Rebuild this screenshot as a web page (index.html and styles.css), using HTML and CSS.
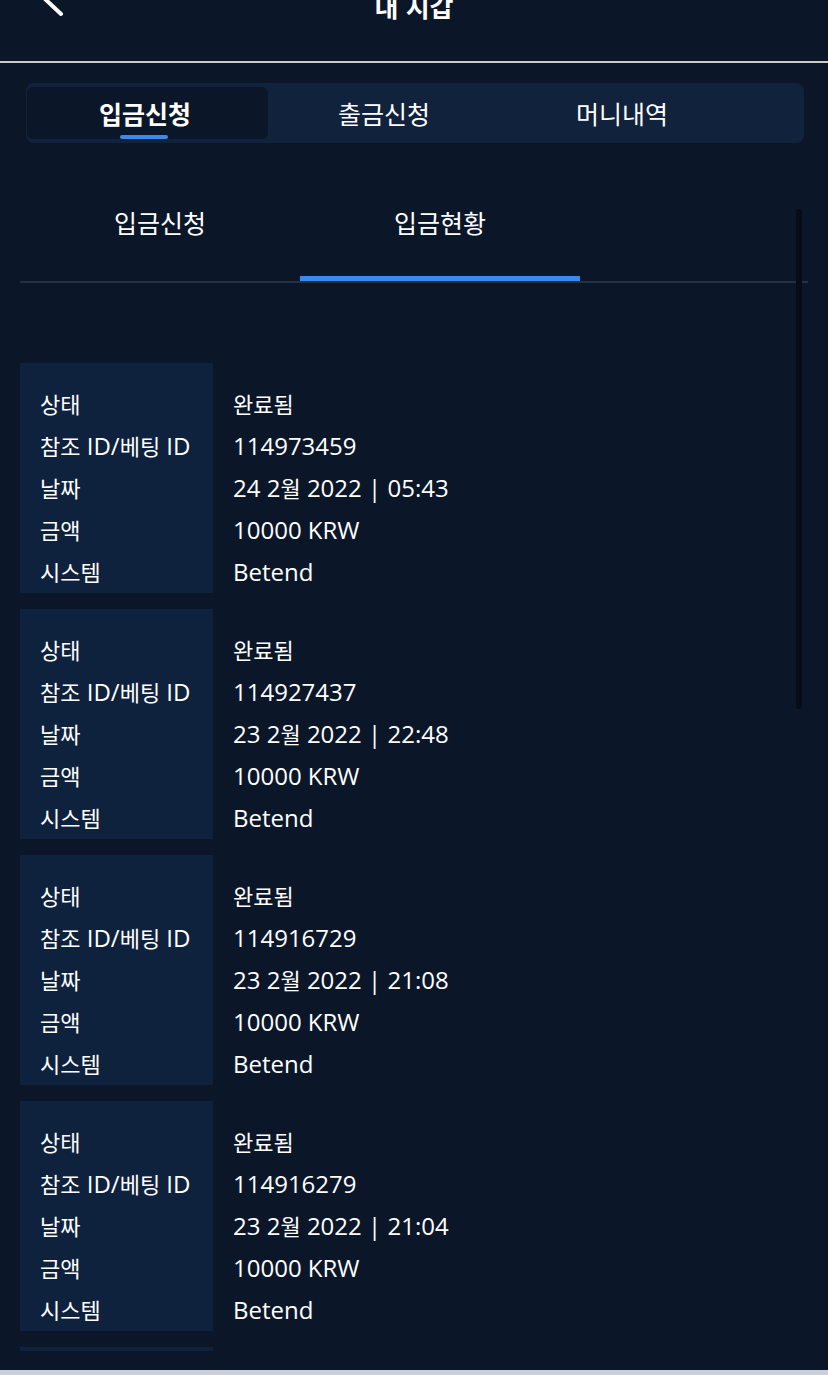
FILE: index.html
```html
<!DOCTYPE html>
<html lang="ko">
<head>
<meta charset="utf-8">
<title>내 지갑</title>
<link rel="stylesheet" href="styles.css">
</head>
<body>
<header class="topbar">
	<a href="javascript:void(0);" class="back">
		<svg width="30" height="42" viewBox="0 0 30 42"><polyline points="25,5 8,22 25,38" fill="none" stroke="#fff" stroke-width="4" stroke-linecap="round" stroke-linejoin="round"/></svg>
	</a>
	<h1 class="title">내 지갑</h1>
	<span></span>
</header>

<nav class="tabs">
	<a href="javascript:void(0);" class="tab active">입금신청</a>
	<a href="javascript:void(0);" class="tab">출금신청</a>
	<a href="javascript:void(0);" class="tab">머니내역</a>
</nav>

<section class="panel">
	<div class="subtabs">
		<a href="javascript:void(0);" class="subtab">입금신청</a>
		<a href="javascript:void(0);" class="subtab active">입금현황</a>
	</div>

	<div class="history">
		<div class="record">
			<div class="labels">
				<div class="ko">상태</div>
				<div><span class="ko">참조</span> ID/<span class="ko">베팅</span> ID</div>
				<div class="ko">날짜</div>
				<div class="ko">금액</div>
				<div class="ko">시스템</div>
			</div>
			<div class="values">
				<div class="ko">완료됨</div>
				<div>114973459</div>
				<div>24 2<span class="ko">월</span> 2022 | 05:43</div>
				<div>10000 KRW</div>
				<div>Betend</div>
			</div>
		</div>
		<div class="record">
			<div class="labels">
				<div class="ko">상태</div>
				<div><span class="ko">참조</span> ID/<span class="ko">베팅</span> ID</div>
				<div class="ko">날짜</div>
				<div class="ko">금액</div>
				<div class="ko">시스템</div>
			</div>
			<div class="values">
				<div class="ko">완료됨</div>
				<div>114927437</div>
				<div>23 2<span class="ko">월</span> 2022 | 22:48</div>
				<div>10000 KRW</div>
				<div>Betend</div>
			</div>
		</div>
		<div class="record">
			<div class="labels">
				<div class="ko">상태</div>
				<div><span class="ko">참조</span> ID/<span class="ko">베팅</span> ID</div>
				<div class="ko">날짜</div>
				<div class="ko">금액</div>
				<div class="ko">시스템</div>
			</div>
			<div class="values">
				<div class="ko">완료됨</div>
				<div>114916729</div>
				<div>23 2<span class="ko">월</span> 2022 | 21:08</div>
				<div>10000 KRW</div>
				<div>Betend</div>
			</div>
		</div>
		<div class="record">
			<div class="labels">
				<div class="ko">상태</div>
				<div><span class="ko">참조</span> ID/<span class="ko">베팅</span> ID</div>
				<div class="ko">날짜</div>
				<div class="ko">금액</div>
				<div class="ko">시스템</div>
			</div>
			<div class="values">
				<div class="ko">완료됨</div>
				<div>114916279</div>
				<div>23 2<span class="ko">월</span> 2022 | 21:04</div>
				<div>10000 KRW</div>
				<div>Betend</div>
			</div>
		</div>
		<!-- next record, only its top edge is in view -->
		<div class="record">
			<div class="labels"></div>
			<div class="values"></div>
		</div>
	</div>

	<div class="scroll-thumb"></div>
</section>

<div class="navbar"></div>
</body>
</html>
```

FILE: styles.css
```css
* {
	box-sizing: border-box;
}
body {
	margin: 0;
	height: 1375px;
	overflow: hidden;
	background-color: #0b1729;
	color: #fff;
	font-family: "Open Sans", "Noto Sans CJK KR", sans-serif;
	font-size: 24px;
}
a {
	color: #fff;
	text-decoration: none;
}

/* header */
.topbar {
	display: grid;
	grid-template-columns: 1fr auto 1fr;
	align-items: start;
	height: 63px;
	border-bottom: 2px solid #cbcbcb;
}
.back svg {
	display: block;
	margin: -24px 0 0 36px;
}
.title {
	margin: -9px 0 0;
	font-family: "Noto Sans CJK KR", sans-serif;
	font-size: 26px;
	line-height: 30px;
	font-weight: 700;
}

/* main tabs */
.tabs {
	display: grid;
	grid-template-columns: 238px 238px 238px;
	height: 60px;
	margin: 20px 24px 0 26px;
	padding: 4px 0 4px 1px;
	background-color: #10223c;
	border-radius: 8px;
}
.tab {
	position: relative;
	display: flex;
	align-items: center;
	justify-content: center;
	font-family: "Noto Sans CJK KR", sans-serif;
	font-size: 25px;
	border-radius: 6px;
}
.tab.active {
	background-color: #0b1729;
	font-weight: 700;
	padding-right: 5px;
	margin-right: -3px;
}
.tab.active::after {
	content: "";
	position: absolute;
	left: 93px;
	bottom: 0;
	width: 48px;
	height: 4px;
	border-radius: 2px;
	background-color: #3b88f0;
}

/* sub tabs + list */
.panel {
	position: relative;
	margin: 50px 20px 0;
}
.subtabs {
	display: flex;
	border-bottom: 2px solid #243142;
}
.subtab {
	width: 280px;
	height: 88px;
	padding-top: 12px;
	line-height: 34px;
	text-align: center;
	font-family: "Noto Sans CJK KR", sans-serif;
	font-size: 25px;
}
.subtab.active {
	box-shadow: inset 0 -5px 0 #3b88f0;
}

.history {
	display: flex;
	flex-direction: column;
	gap: 16px;
	height: 988px;
	margin-top: 80px;
	overflow: hidden;
}
.record {
	display: flex;
	flex-shrink: 0;
	height: 230px;
	line-height: 42px;
	white-space: nowrap;
}
.labels {
	width: 193px;
	padding: 20px 0 0 20px;
	background-color: #0f223d;
}
.values {
	padding: 20px 0 0 20px;
}
.ko {
	font-size: 22px;
}

.scroll-thumb {
	position: absolute;
	top: 16px;
	right: 6px;
	width: 6px;
	height: 500px;
	border-radius: 3px;
	background-color: #060d18;
}

.navbar {
	height: 5px;
	margin-top: 19px;
	background-color: #c8cfd6;
}
```
